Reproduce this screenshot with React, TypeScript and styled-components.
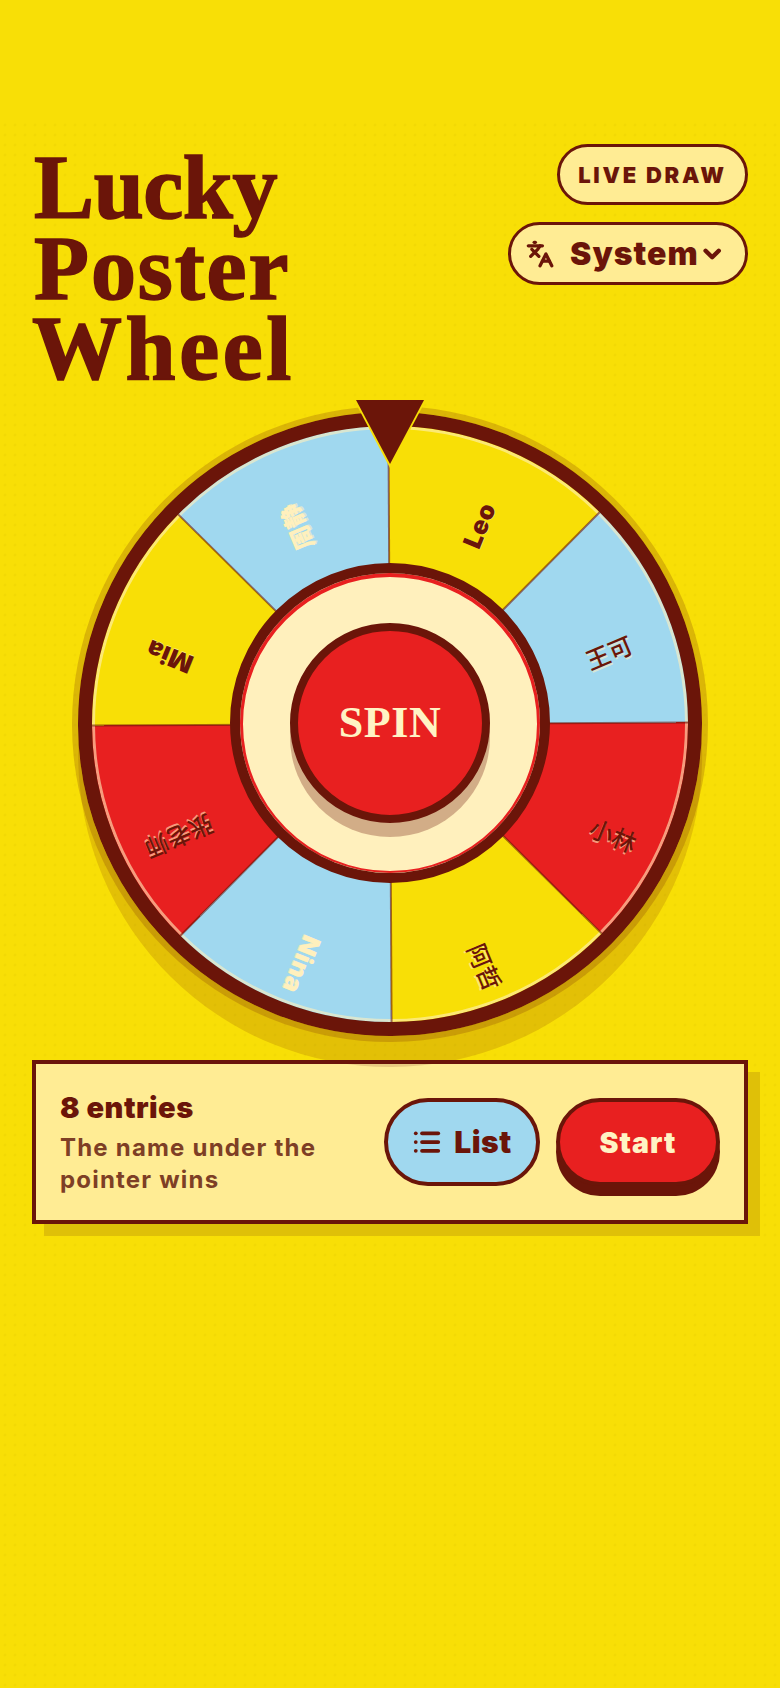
import { createGlobalStyle, styled } from "styled-components";
import { ChevronDown, Languages, List } from "lucide-react";

const dark = "#6b1509";
const yellow = "#f8df06";
const red = "#e82020";
const blue = "#a0d8ef";
const cream = "#fff0bd";
const sans = `Inter, "Noto Sans CJK SC", sans-serif`;
const serif = `"Liberation Serif", serif`;

const entries = [
  { name: "Leo", light: false, cjk: false, radius: 238 },
  { name: "王可", light: false, cjk: true, radius: 238 },
  { name: "小林", light: false, cjk: true, radius: 240 },
  { name: "阿哲", light: false, cjk: true, radius: 240 },
  { name: "Nina", light: true, cjk: false, radius: 236 },
  { name: "张老师", light: false, cjk: true, radius: 229 },
  { name: "Mia", light: false, cjk: false, radius: 238 },
  { name: "周静", light: true, cjk: true, radius: 238 },
];

const GlobalStyle = createGlobalStyle`
  html, body { margin: 0; padding: 0; background: ${yellow}; }
  * { box-sizing: border-box; }
`;

export default function App() {
  return (
    <>
      <GlobalStyle />
      <Page>
        <Poster>
          <Header>
            <Title>
              <TitleLine $track={-0.4}>Lucky</TitleLine>
              <TitleLine $track={1.9}>Poster</TitleLine>
              <TitleLine $track={3.6} $indent={-2}>Wheel</TitleLine>
            </Title>
            <Controls>
              <LiveBadge>LIVE DRAW</LiveBadge>
              <LangPicker>
                <Languages size={32} strokeWidth={2.8} />
                <LangName>System</LangName>
                <ChevronDown size={30} strokeWidth={4} />
              </LangPicker>
            </Controls>
          </Header>
          <WheelStage>
            <Disc>
              {entries.map((e, i) => (
                <Divider key={e.name} $angle={i * 45} />
              ))}
              {entries.map((e, i) => {
                const angle = 22.5 + i * 45;
                const rad = (angle * Math.PI) / 180;
                return (
                  <SliceLabel
                    key={e.name}
                    $light={e.light}
                    $cjk={e.cjk}
                    style={{
                      left: 298 + e.radius * Math.sin(rad),
                      top: 320 - e.radius * Math.cos(rad),
                      transform: `translate(-50%, -50%) rotate(${angle - 90}deg)`,
                    }}
                  >
                    {e.name}
                  </SliceLabel>
                );
              })}
            </Disc>
            <Hub>
              <SpinButton>SPIN</SpinButton>
            </Hub>
            <Pointer />
          </WheelStage>
          <InfoCard>
            <InfoText>
              <Count>8 entries</Count>
              <Hint>The name under the pointer wins</Hint>
            </InfoText>
            <ListButton>
              <List size={30} strokeWidth={3} />
              List
            </ListButton>
            <StartButton>Start</StartButton>
          </InfoCard>
        </Poster>
      </Page>
    </>
  );
}

const Page = styled.div`
  min-height: 1688px;
  padding-top: 120px;
  background: ${yellow};
  font-family: ${sans};
  color: ${dark};
`;

const Poster = styled.main`
  min-height: 1568px;
  padding: 24px 32px;
  background-image: radial-gradient(circle at center, #f2d905 0, #f2d905 1px, transparent 1.8px);
  background-size: 10px 10px;
`;

const Header = styled.header`
  display: flex;
  justify-content: space-between;
  align-items: flex-start;
  height: 268px;
`;

const Title = styled.h1`
  margin: 4px 0 0 2px;
  font-family: ${serif};
  font-size: 90px;
  font-weight: 700;
  line-height: 80.5px;
  -webkit-text-stroke: 1.6px ${dark};
`;

const TitleLine = styled.span<{ $track: number; $indent?: number }>`
  display: block;
  margin-left: ${(p) => p.$indent ?? 0}px;
  letter-spacing: ${(p) => p.$track}px;
`;

const Controls = styled.div`
  display: flex;
  flex-direction: column;
  align-items: flex-end;
  gap: 17px;
`;

const LiveBadge = styled.div`
  display: flex;
  align-items: center;
  justify-content: center;
  width: 191px;
  height: 61px;
  border: 3px solid ${dark};
  border-radius: 31px;
  background: #ffec94;
  font-size: 22px;
  font-weight: 900;
  letter-spacing: 2.7px;
`;

const LangPicker = styled.div`
  display: flex;
  align-items: center;
  width: 240px;
  height: 63px;
  padding: 0 20px 0 15px;
  border: 3px solid ${dark};
  border-radius: 32px;
  background: #ffec94;
`;

const LangName = styled.span`
  margin: 0 auto 0 16px;
  font-size: 32px;
  font-weight: 900;
  letter-spacing: 1px;
`;

const WheelStage = styled.div`
  position: relative;
  z-index: 1;
  display: flex;
  align-items: center;
  justify-content: center;
  width: 624px;
  height: 624px;
  margin: 0 auto;
`;

const Disc = styled.div`
  position: absolute;
  inset: 0;
  border: 14px solid ${dark};
  border-radius: 50%;
  background: conic-gradient(
    ${yellow} 0 45deg,
    ${blue} 45deg 90deg,
    ${red} 90deg 135deg,
    ${yellow} 135deg 180deg,
    ${blue} 180deg 225deg,
    ${red} 225deg 270deg,
    ${yellow} 270deg 315deg,
    ${blue} 315deg 360deg
  );
  box-shadow:
    inset 0 0 0 3px rgba(255, 240, 189, 0.6),
    0 0 0 6px rgba(107, 21, 9, 0.2),
    0 31px 0 0 rgba(107, 21, 9, 0.15);
  transform: rotate(-0.3deg);
`;

const Divider = styled.span<{ $angle: number }>`
  position: absolute;
  left: 50%;
  top: 0;
  width: 2px;
  height: 50%;
  margin-left: -1px;
  background: rgba(107, 21, 9, 0.6);
  transform-origin: 50% 100%;
  transform: rotate(${(p) => p.$angle}deg);
`;

const SliceLabel = styled.span<{ $light: boolean; $cjk: boolean }>`
  position: absolute;
  white-space: nowrap;
  font-size: ${(p) => (p.$cjk ? 24 : 25)}px;
  font-weight: ${(p) => (p.$cjk && !p.$light ? 500 : 900)};
  letter-spacing: ${(p) => (p.$cjk ? 0 : 0.5)}px;
  line-height: 1;
  color: ${(p) => (p.$light ? "#fff0bd" : dark)};
  text-shadow: 0 ${(p) => (p.$cjk ? 2 : 1)}px 0 rgba(255, 240, 189, 0.6);
`;

const Hub = styled.div`
  position: relative;
  display: flex;
  align-items: center;
  justify-content: center;
  width: 320px;
  height: 320px;
  margin-top: -2px;
  border: 10px solid ${dark};
  border-radius: 50%;
  background: ${cream};
  box-shadow: inset 0 1px 0 3px ${red};
`;

const SpinButton = styled.div`
  display: flex;
  align-items: center;
  justify-content: center;
  width: 200px;
  height: 200px;
  padding-bottom: 2px;
  border: 8px solid ${dark};
  border-radius: 50%;
  background: ${red};
  box-shadow: 0 14px 0 rgba(107, 21, 9, 0.3);
  color: #fff3c4;
  font-family: ${serif};
  font-size: 44px;
  font-weight: 700;
  letter-spacing: 0.6px;
`;

const Pointer = styled.div`
  position: absolute;
  top: -12px;
  left: 50%;
  width: 72px;
  height: 68px;
  margin-left: -36px;
  background: ${yellow};
  clip-path: polygon(0 0, 100% 0, 50% 100%);

  &::after {
    content: "";
    position: absolute;
    inset: 0 2px 4px;
    background: ${dark};
    clip-path: polygon(0 0, 100% 0, 50% 100%);
  }
`;

const InfoCard = styled.section`
  display: flex;
  align-items: center;
  gap: 16px;
  height: 164px;
  margin-top: 24px;
  padding: 0 24px;
  border: 4px solid ${dark};
  background: #ffec94;
  box-shadow: 12px 12px 0 #dfc008;
`;

const InfoText = styled.div`
  flex: 1;
  min-width: 0;
  padding-top: 2px;
`;

const Count = styled.div`
  font-size: 29px;
  font-weight: 900;
  line-height: 36px;
  letter-spacing: 0.5px;
  margin-bottom: 6px;
`;

const Hint = styled.div`
  font-size: 24px;
  font-weight: 700;
  line-height: 32px;
  letter-spacing: 1.2px;
  color: #7e3f25;
`;

const ListButton = styled.div`
  display: flex;
  align-items: center;
  justify-content: center;
  gap: 12px;
  width: 156px;
  height: 88px;
  border: 4px solid ${dark};
  border-radius: 44px;
  background: ${blue};
  font-size: 30px;
  font-weight: 900;
  letter-spacing: 0.5px;
`;

const StartButton = styled.div`
  display: flex;
  align-items: center;
  justify-content: center;
  width: 164px;
  height: 88px;
  border: 4px solid ${dark};
  border-radius: 44px;
  background: ${red};
  box-shadow: 0 10px 0 ${dark};
  color: #fff3c4;
  font-size: 28.5px;
  font-weight: 900;
  letter-spacing: 1px;
`;
